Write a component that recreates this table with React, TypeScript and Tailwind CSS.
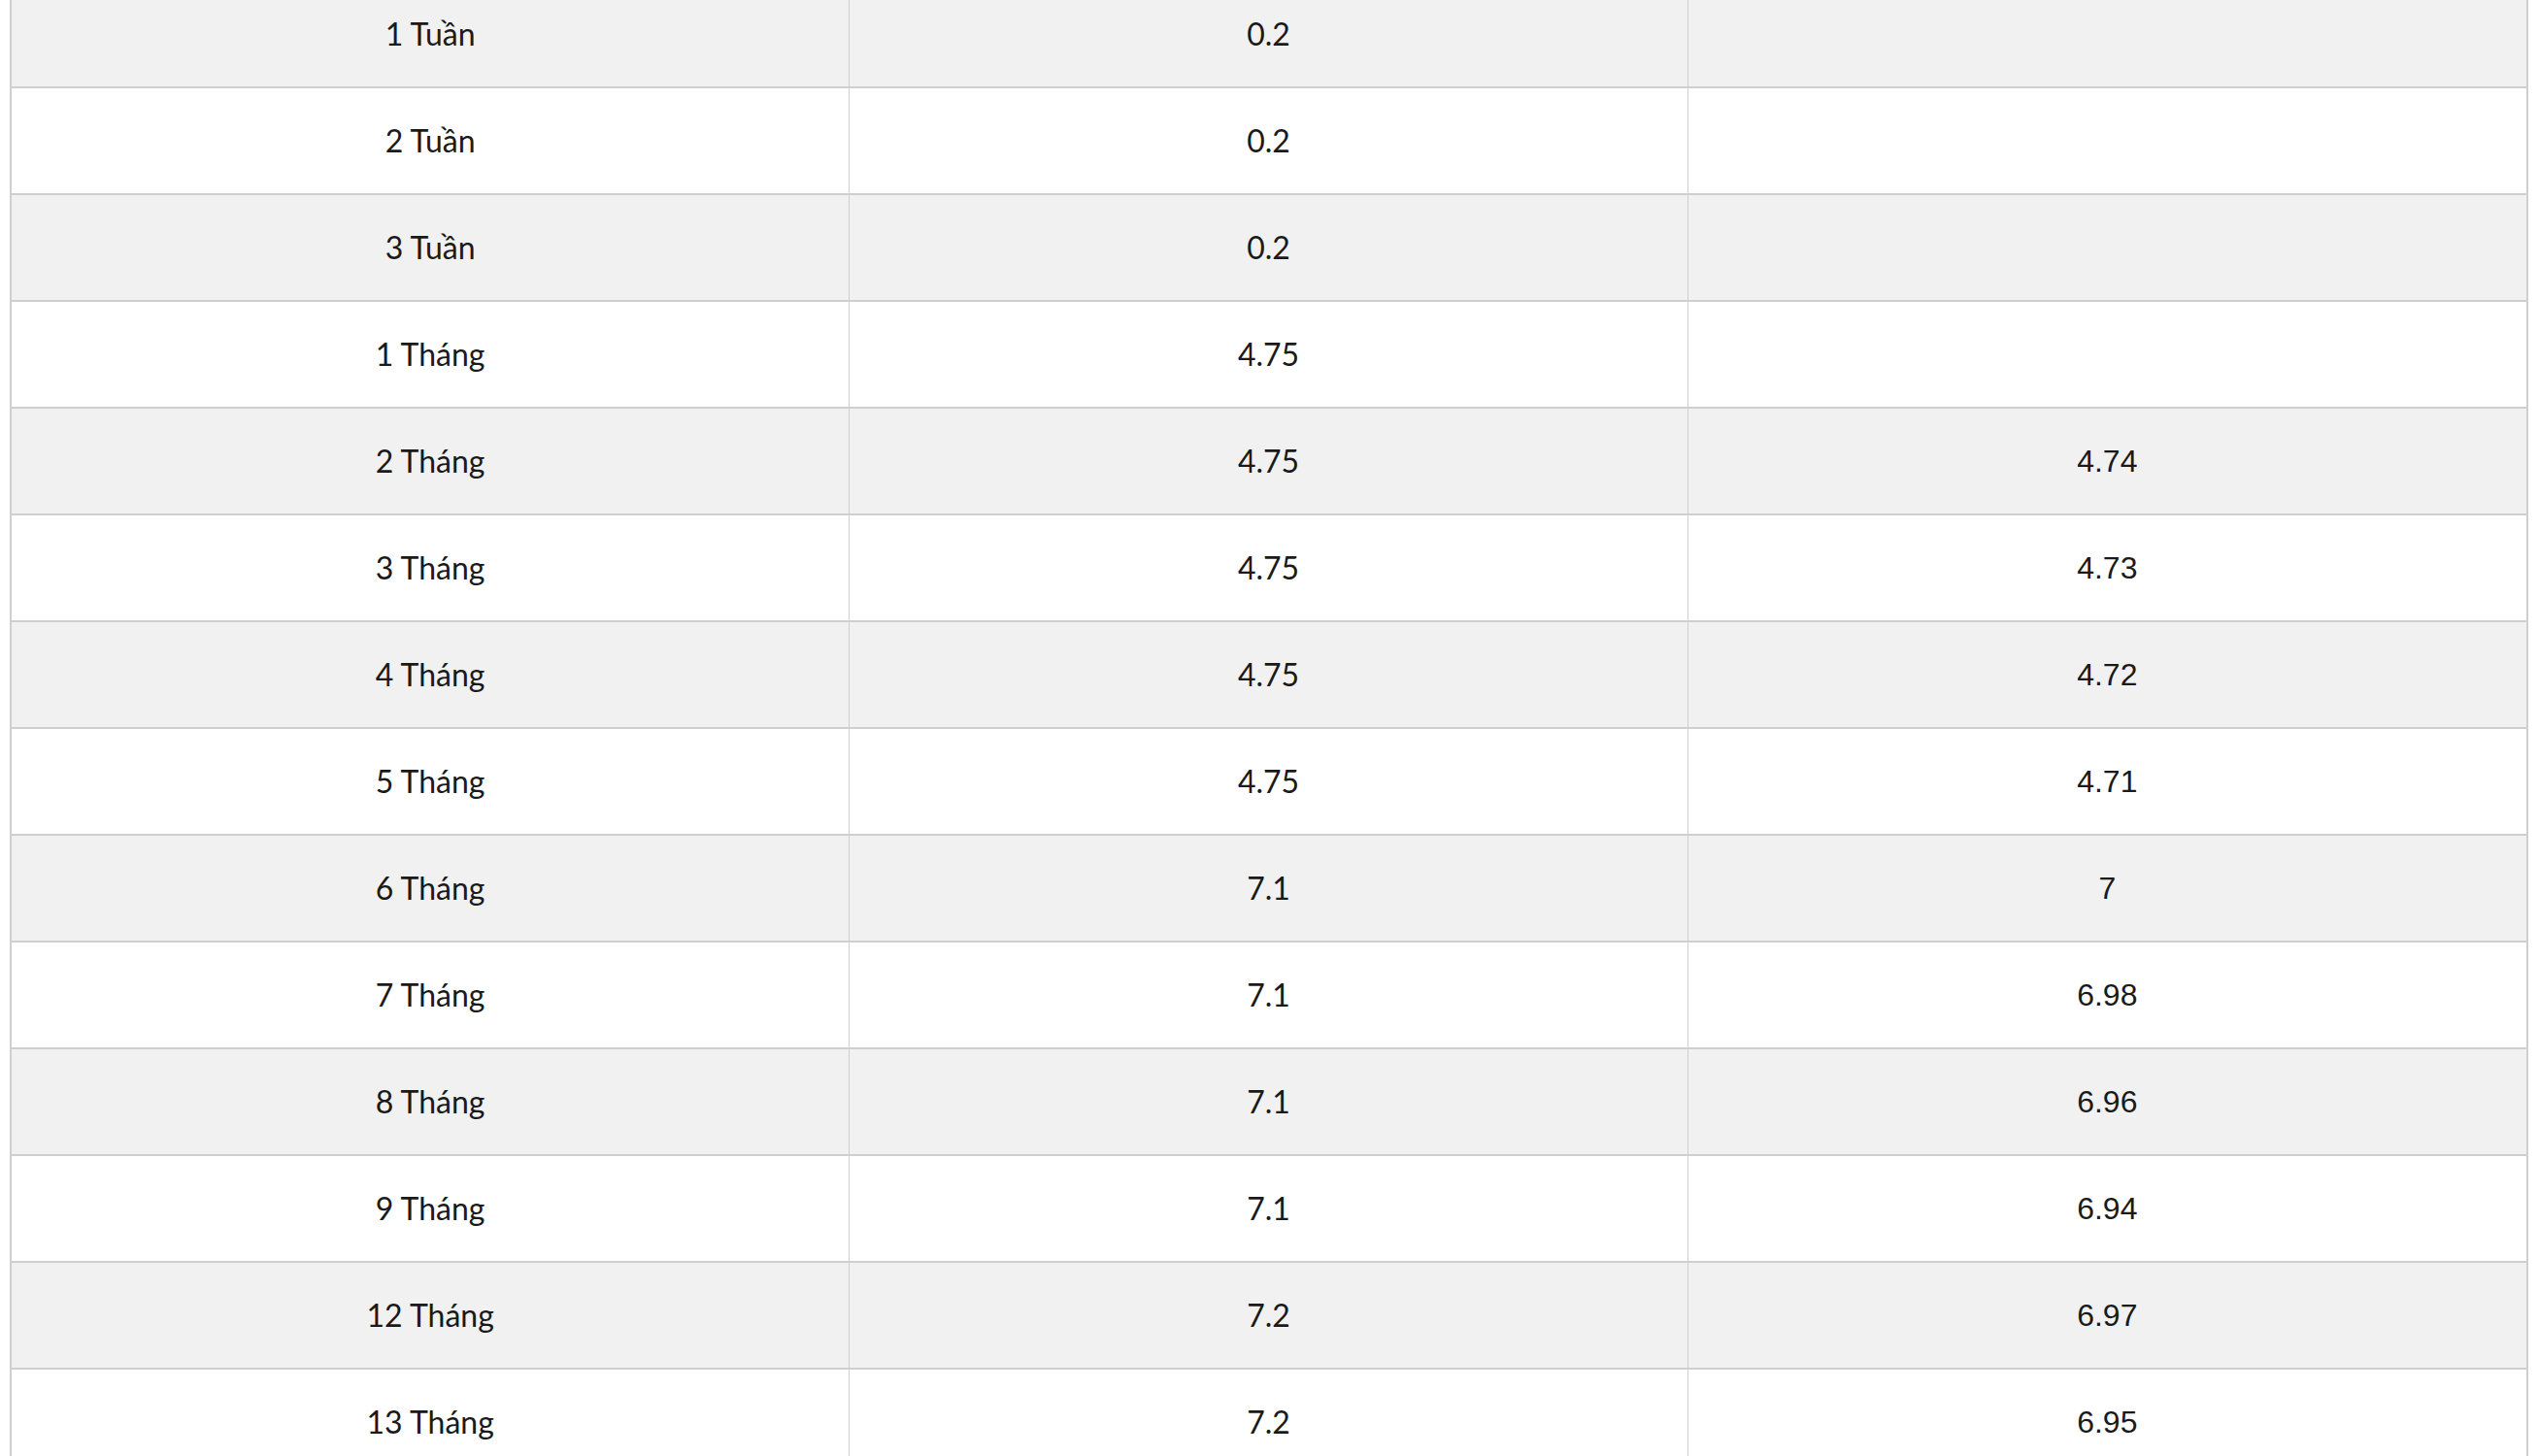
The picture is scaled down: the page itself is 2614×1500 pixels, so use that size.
const rows: [string, string, string][] = [
  ['1 Tuần', '0.2', ''],
  ['2 Tuần', '0.2', ''],
  ['3 Tuần', '0.2', ''],
  ['1 Tháng', '4.75', ''],
  ['2 Tháng', '4.75', '4.74'],
  ['3 Tháng', '4.75', '4.73'],
  ['4 Tháng', '4.75', '4.72'],
  ['5 Tháng', '4.75', '4.71'],
  ['6 Tháng', '7.1', '7'],
  ['7 Tháng', '7.1', '6.98'],
  ['8 Tháng', '7.1', '6.96'],
  ['9 Tháng', '7.1', '6.94'],
  ['12 Tháng', '7.2', '6.97'],
  ['13 Tháng', '7.2', '6.95'],
];

export default function App() {
  return (
    <div className="min-h-screen bg-white px-[10px] overflow-hidden">
      <div className="-mt-[19px] border-x-2 border-[#cfcfcf] text-[32px] text-[#1a1a1a]">
        {rows.map((row, i) => (
          <div
            key={i}
            className={`grid grid-cols-3 h-[110px] border-b-2 border-[#cfcfcf] ${
              i % 2 === 0 ? 'bg-[#f1f1f1]' : 'bg-white'
            }`}
          >
            <div className="flex items-center justify-center border-r border-[#cfcfcf] font-['Lato','Open_Sans',sans-serif]">
              {row[0]}
            </div>
            <div className="flex items-center justify-center border-r border-[#cfcfcf] font-['Lato','Open_Sans',sans-serif]">
              {row[1]}
            </div>
            <div className="flex items-center justify-center font-['Liberation_Sans',Arial,sans-serif]">
              {row[2]}
            </div>
          </div>
        ))}
      </div>
    </div>
  );
}
